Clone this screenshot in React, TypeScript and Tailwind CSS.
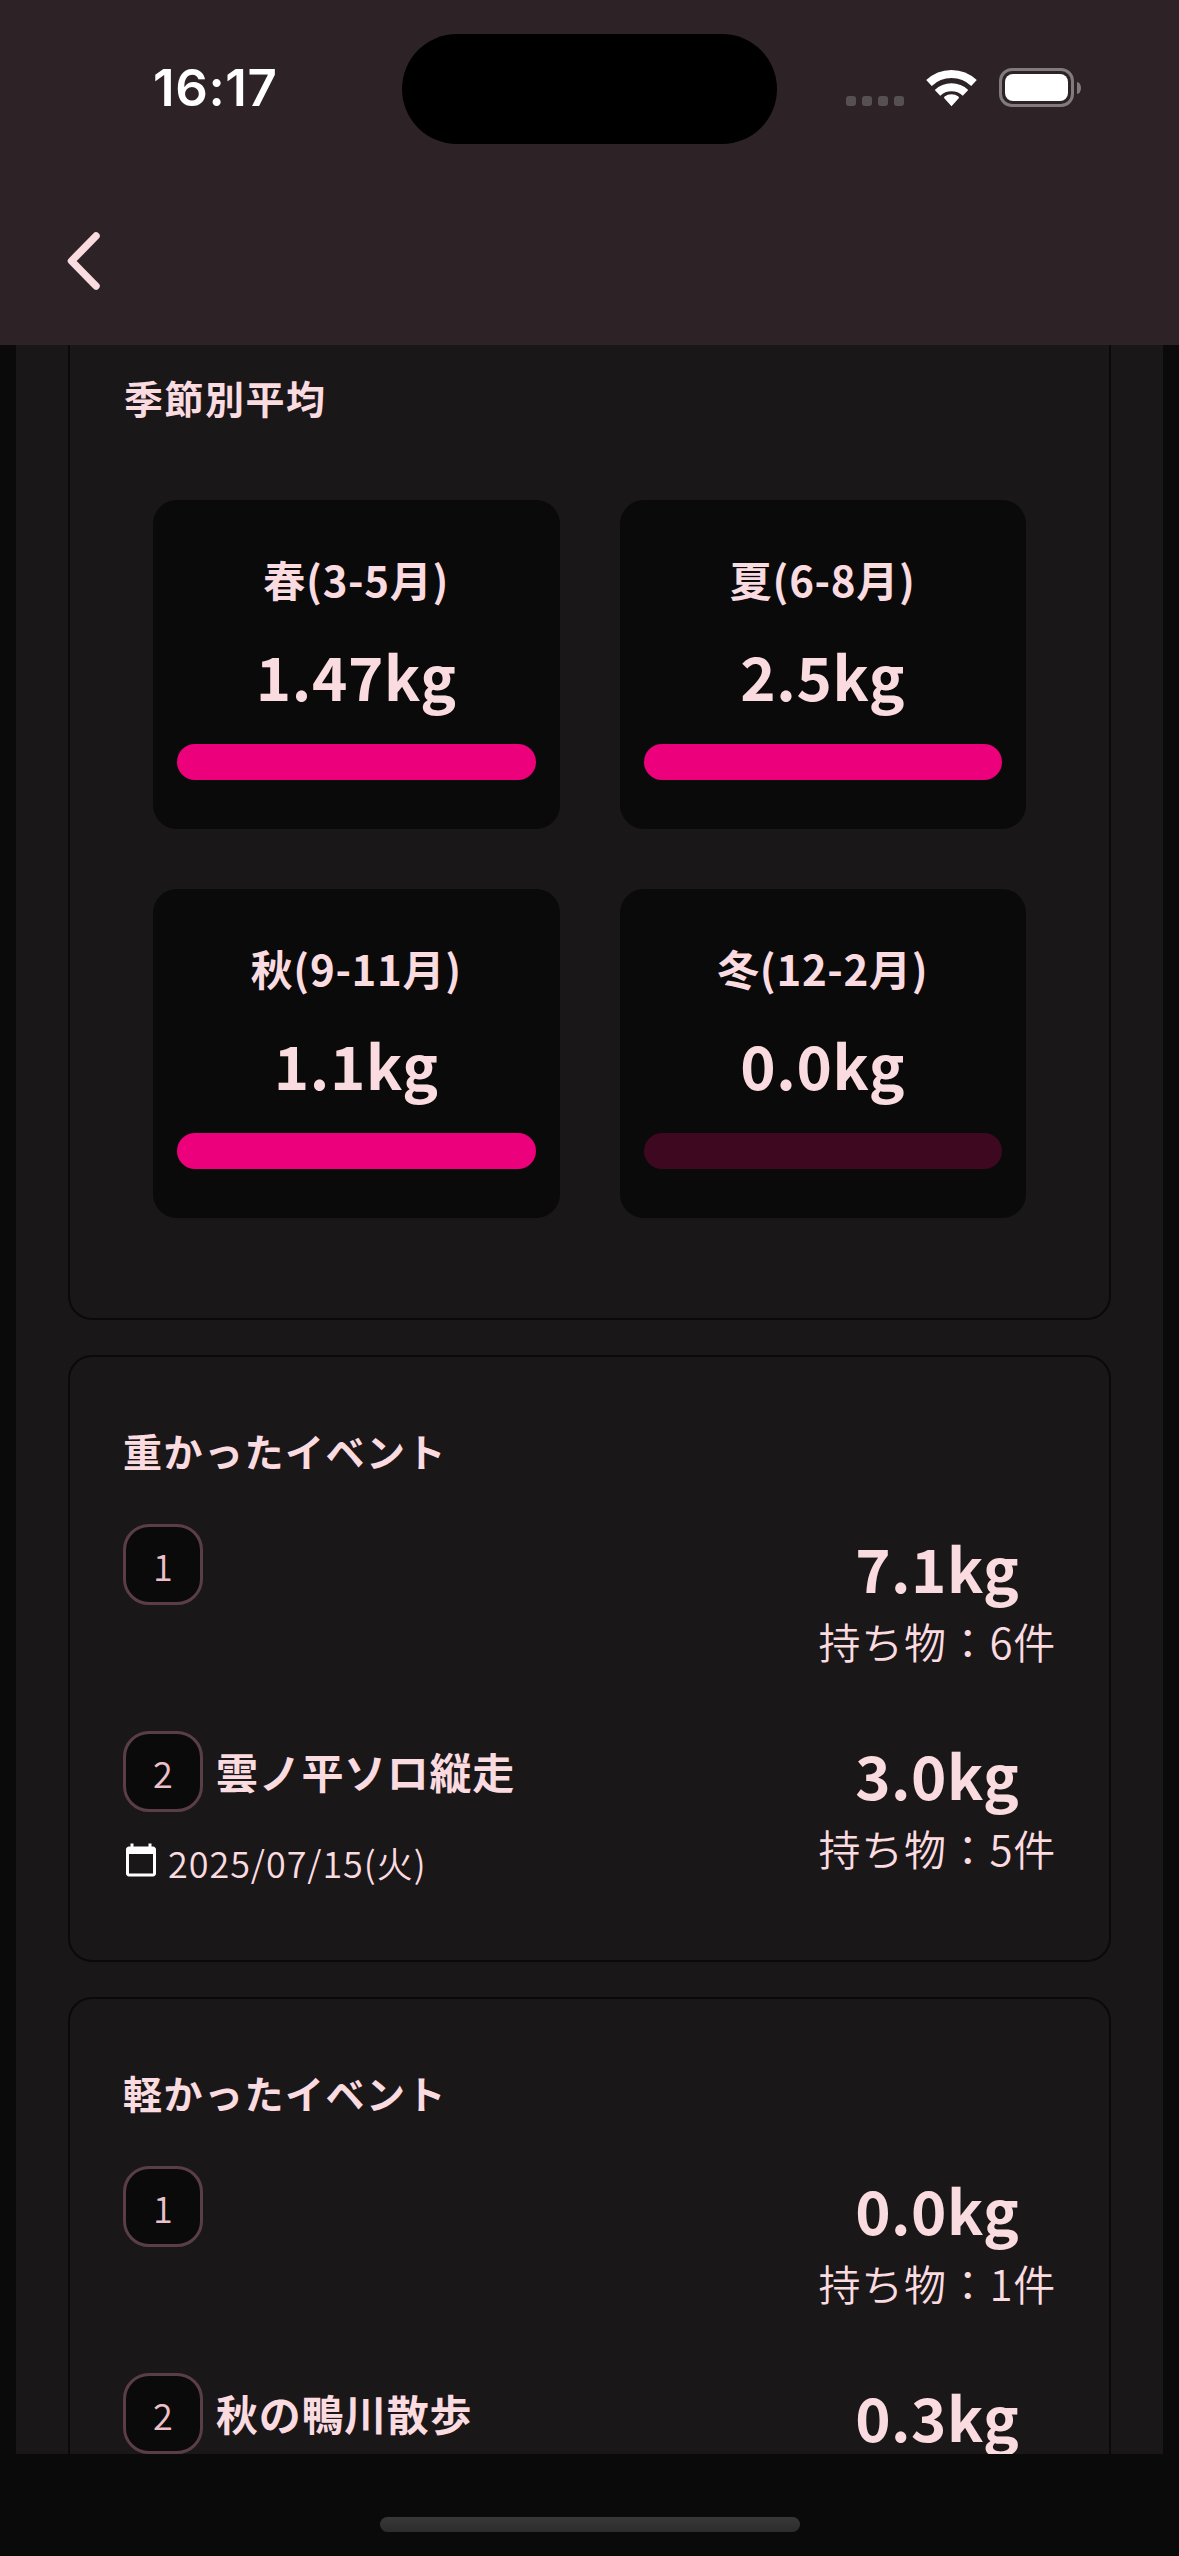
import { MdCalendarToday } from "react-icons/md";

type TSeason = { label: string; average: string; filled: boolean };
type TEvent = { name?: string; date?: string; weight: string; count: number };

const seasons: TSeason[] = [
  { label: "春(3-5月)", average: "1.47kg", filled: true },
  { label: "夏(6-8月)", average: "2.5kg", filled: true },
  { label: "秋(9-11月)", average: "1.1kg", filled: true },
  { label: "冬(12-2月)", average: "0.0kg", filled: false },
];

const heavyEvents: TEvent[] = [
  { weight: "7.1kg", count: 6 },
  { name: "雲ノ平ソロ縦走", date: "2025/07/15(火)", weight: "3.0kg", count: 5 },
];

const lightEvents: TEvent[] = [
  { weight: "0.0kg", count: 1 },
  { name: "秋の鴨川散歩", weight: "0.3kg", count: 2 },
];

const StatusBar = () => (
  <div className="relative flex h-[178px] items-start justify-between pt-[58px] pr-[98px] pl-[153px]">
    <span className="font-['Inter'] text-[51px] leading-[60px] font-semibold tracking-[0.6px] text-white">
      16:17
    </span>
    <div className="absolute top-[34px] left-[402px] h-[110px] w-[375px] rounded-full bg-black" />
    <div className="mt-[10px] flex">
      <div className="mt-[28px] mr-[22px] flex gap-[6px]">
        {[0, 1, 2, 3].map((dot) => (
          <div key={dot} className="h-[10px] w-[10px] rounded-[3px] bg-[#575052]" />
        ))}
      </div>
      <svg className="mt-[1px] mr-[22px] h-[38px] w-[51px]" viewBox="0 0 51 38" fill="none">
        <path d="M3 14a32.5 32.5 0 0 1 45 0" stroke="white" strokeWidth="8" />
        <path d="M11.5 23.8a20.5 20.5 0 0 1 28 0" stroke="white" strokeWidth="8" />
        <path
          d="M25.5 37.3l-7.2-8q-.7-1 .3-1.7a11 11 0 0 1 13.8 0q1 .7.3 1.7z"
          fill="white"
        />
      </svg>
      <div className="flex h-[39px] items-center gap-[3px]">
        <div className="h-[39px] w-[75px] rounded-[13px] border-[3px] border-[#817b7d] p-[3px]">
          <div className="h-full w-full rounded-[8px] bg-white" />
        </div>
        <div className="h-[12px] w-[4px] rounded-r-[100%_50%] bg-[#817b7d]" />
      </div>
    </div>
  </div>
);

const SeasonCard = ({ season }: { season: TSeason }) => (
  <div className="flex h-[329px] flex-col items-center rounded-3xl bg-[#0a0a0a] px-6 pt-[49px]">
    <p className="text-[42px] leading-[60px] font-bold tracking-[0.7px]">{season.label}</p>
    <p className="mt-[24px] text-[60px] leading-[84px] font-bold tracking-[0.7px]">
      {season.average}
    </p>
    <div
      className={`mt-[27px] h-9 w-full rounded-full ${
        season.filled ? "bg-[#ed007c]" : "bg-[#3e0821]"
      }`}
    />
  </div>
);

const EventRow = ({ event, rank }: { event: TEvent; rank: number }) => (
  <div className="flex h-[147px] items-start justify-between">
    <div>
      <div className="flex items-center gap-[13px]">
        <div className="flex h-[81px] w-[80px] items-center justify-center rounded-[26px] border-[3px] border-[#5a3e46] bg-[#0a0a0a] text-[36px] leading-[52px] font-[350] text-[#ecc0c9]">
          {rank}
        </div>
        {event.name && (
          <p className="-mt-[2px] text-[42px] leading-[60px] font-bold tracking-[0.7px]">
            {event.name}
          </p>
        )}
      </div>
      {event.date && (
        <div className="mt-6 flex gap-[9px]">
          <MdCalendarToday className="mt-[6px] h-9 w-9 text-white" />
          <p className="text-[36px] leading-[52px] font-[350] tracking-[0.95px]">{event.date}</p>
        </div>
      )}
    </div>
    <div className="mt-px flex flex-col items-center">
      <p className="text-[60px] leading-[84px] font-bold tracking-[0.5px]">{event.weight}</p>
      <p className="mt-[2px] text-[42px] leading-[60px] font-[350] tracking-[0.75px]">
        持ち物：{event.count}件
      </p>
    </div>
  </div>
);

const EventSection = ({ title, events }: { title: string; events: TEvent[] }) => (
  <section className="h-[607px] rounded-3xl border-2 border-[#0a0a0a] pt-[65px] pr-[53px] pl-[53px]">
    <h2 className="text-[39px] leading-[56px] font-bold tracking-[1.5px]">{title}</h2>
    <div className="mt-[46px] flex flex-col gap-[60px]">
      {events.map((event, index) => (
        <EventRow key={index} event={event} rank={index + 1} />
      ))}
    </div>
  </section>
);

const App = () => {
  return (
    <div className="flex h-[2556px] w-[1179px] flex-col overflow-hidden bg-[#0a0a0a] font-['Noto_Sans_CJK_JP',sans-serif] text-[#fadbe0]">
      <header className="h-[345px] shrink-0 bg-[#2d2327]">
        <StatusBar />
        <svg className="mt-[50px] ml-[63px] h-[66px] w-[42px]" viewBox="0 0 42 66" fill="none">
          <path
            d="M33 8L8.5 33L33 58"
            stroke="#fadbe0"
            strokeWidth="7.5"
            strokeLinecap="round"
            strokeLinejoin="round"
          />
        </svg>
      </header>

      <main className="mx-4 flex h-[2109px] shrink-0 flex-col gap-[35px] overflow-hidden bg-[#1a1718] px-[52px]">
        <section className="h-[975px] shrink-0 rounded-b-3xl border-2 border-t-0 border-[#0a0a0a] pt-[24px]">
          <h2 className="pl-[54px] text-[39px] leading-[56px] font-bold tracking-[1.5px]">
            季節別平均
          </h2>
          <div className="mt-[75px] grid grid-cols-2 gap-[60px] px-[83px]">
            {seasons.map((season) => (
              <SeasonCard key={season.label} season={season} />
            ))}
          </div>
        </section>
        <div className="flex flex-col gap-[35px]">
          <EventSection title="重かったイベント" events={heavyEvents} />
          <EventSection title="軽かったイベント" events={lightEvents} />
        </div>
      </main>

      <footer className="flex justify-center pt-[63px]">
        <div className="h-[15px] w-[420px] rounded-full bg-linear-to-b from-[#383838] to-[#2c2c2c]" />
      </footer>
    </div>
  );
};

export default App;
